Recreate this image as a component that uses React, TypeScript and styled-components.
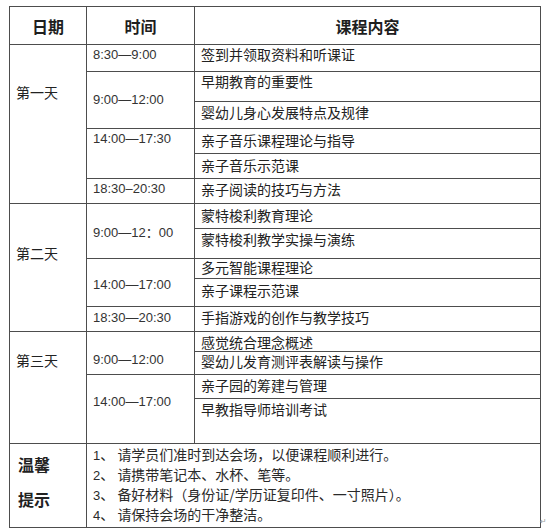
import styled, { createGlobalStyle } from "styled-components"

const GlobalStyle = createGlobalStyle`
  html, body {
    margin: 0;
    padding: 0;
    background: #ffffff;
  }
  body {
    font-family: "Noto Sans CJK SC", "Noto Sans", sans-serif;
    color: #222222;
  }
`

const Page = styled.div`
  position: relative;
  width: 548px;
  height: 532px;
  padding: 6px 0 0 9px;
  box-sizing: border-box;
`

const Table = styled.table`
  width: 531px;
  border-collapse: collapse;
  table-layout: fixed;
  border: 1px solid #4d4d4d;
`

const Row = styled.tr<{ $h: number }>`
  height: ${({ $h }) => $h}px;
`

const HeadCell = styled.th`
  border: 1px solid #4d4d4d;
  padding: 0;
  font-size: 16px;
  font-weight: 700;
  line-height: 20px;
  text-align: center;
  vertical-align: middle;
  color: #1e1e1e;
`

const DayCell = styled.td<{ $top: number }>`
  border: 1px solid #4d4d4d;
  padding: ${({ $top }) => $top}px 0 0 6px;
  font-size: 14px;
  line-height: 20px;
  vertical-align: top;
`

const TimeCell = styled.td<{ $top: number }>`
  border: 1px solid #4d4d4d;
  padding: ${({ $top }) => $top}px 0 0 6px;
  font-family: "Liberation Sans", "Noto Sans CJK SC", sans-serif;
  font-size: 13px;
  line-height: 20px;
  vertical-align: top;
  color: #333333;
  white-space: nowrap;
`

const ContentCell = styled.td<{ $top?: number }>`
  border: 1px solid #4d4d4d;
  padding: ${({ $top = 1 }) => $top}px 0 0 6px;
  font-size: 14px;
  line-height: 17px;
  vertical-align: top;
  white-space: nowrap;
  overflow: hidden;
`

const TipTitle = styled.td`
  border: 1px solid #4d4d4d;
  padding: 3px 0 0 8px;
  font-size: 16px;
  font-weight: 700;
  line-height: 35px;
  vertical-align: top;
`

const TipList = styled.td`
  border: 1px solid #4d4d4d;
  padding: 1px 0 0 6px;
  vertical-align: top;
`

const TipLine = styled.div`
  font-size: 14px;
  line-height: 18px;
  color: #2a2a2a;
  white-space: nowrap;
`

const TipNum = styled.span`
  font-family: "Liberation Sans", "Noto Sans CJK SC", sans-serif;
  font-size: 13px;
`

const ReturnMark = styled.span`
  position: absolute;
  left: 540px;
  top: 517px;
  font-family: "DejaVu Sans", sans-serif;
  font-size: 8px;
  color: #9a9a9a;
`

type Item = { text: string; h: number; top?: number }
type Slot = { time: string; top: number; items: Item[] }
type Day = { label: string; top: number; slots: Slot[] }

const days: Day[] = [
  {
    label: "第一天",
    top: 37,
    slots: [
      { time: "8:30—9:00", top: 0, items: [{ text: "签到并领取资料和听课证", h: 27 }] },
      {
        time: "9:00—12:00",
        top: 18,
        items: [
          { text: "早期教育的重要性", h: 30 },
          { text: "婴幼儿身心发展特点及规律", h: 27, top: 2 },
        ],
      },
      {
        time: "14:00—17:30",
        top: 0,
        items: [
          { text: "亲子音乐课程理论与指导", h: 25, top: 3 },
          { text: "亲子音乐示范课", h: 25, top: 3 },
        ],
      },
      { time: "18:30–20:30", top: 0, items: [{ text: "亲子阅读的技巧与方法", h: 25, top: 2 }] },
    ],
  },
  {
    label: "第二天",
    top: 39,
    slots: [
      {
        time: "9:00—12：00",
        top: 19,
        items: [
          { text: "蒙特梭利教育理论", h: 25, top: 3 },
          { text: "蒙特梭利教学实操与演练", h: 30, top: 2 },
        ],
      },
      {
        time: "14:00—17:00",
        top: 16,
        items: [
          { text: "多元智能课程理论", h: 20, top: 0 },
          { text: "亲子课程示范课", h: 28, top: 3 },
        ],
      },
      { time: "18:30—20:30", top: 1, items: [{ text: "手指游戏的创作与教学技巧", h: 25, top: 2 }] },
    ],
  },
  {
    label: "第三天",
    top: 18,
    slots: [
      {
        time: "9:00—12:00",
        top: 18,
        items: [
          { text: "感觉统合理念概述", h: 19, top: 2 },
          { text: "婴幼儿发育测评表解读与操作", h: 23, top: 1 },
        ],
      },
      {
        time: "14:00—17:00",
        top: 17,
        items: [
          { text: "亲子园的筹建与管理", h: 24, top: 2 },
          { text: "早教指导师培训考试", h: 45, top: 2 },
        ],
      },
    ],
  },
]

const tips = [
  "请学员们准时到达会场，以便课程顺利进行。",
  "请携带笔记本、水杯、笔等。",
  "备好材料（身份证/学历证复印件、一寸照片）。",
  "请保持会场的干净整洁。",
]

export default function App() {
  const rows: JSX.Element[] = []

  days.forEach((day, di) => {
    const daySpan = day.slots.reduce((n, s) => n + s.items.length, 0)
    day.slots.forEach((slot, si) => {
      slot.items.forEach((item, ii) => {
        rows.push(
          <Row key={`${di}-${si}-${ii}`} $h={item.h}>
            {si === 0 && ii === 0 && (
              <DayCell rowSpan={daySpan} $top={day.top}>
                {day.label}
              </DayCell>
            )}
            {ii === 0 && (
              <TimeCell rowSpan={slot.items.length} $top={slot.top}>
                {slot.time}
              </TimeCell>
            )}
            <ContentCell $top={item.top}>{item.text}</ContentCell>
          </Row>
        )
      })
    })
  })

  return (
    <>
      <GlobalStyle />
      <Page>
        <Table>
          <colgroup>
            <col style={{ width: 77 }} />
            <col style={{ width: 108 }} />
            <col style={{ width: 346 }} />
          </colgroup>
          <tbody>
            <Row $h={38}>
              <HeadCell>日期</HeadCell>
              <HeadCell>时间</HeadCell>
              <HeadCell>课程内容</HeadCell>
            </Row>
            {rows}
            <Row $h={84}>
              <TipTitle>
                <div>温馨</div>
                <div>提示</div>
              </TipTitle>
              <TipList colSpan={2}>
                {tips.map((t, i) => (
                  <TipLine key={i}>
                    <TipNum>{i + 1}</TipNum>、 {t}
                  </TipLine>
                ))}
              </TipList>
            </Row>
          </tbody>
        </Table>
        <ReturnMark>↵</ReturnMark>
      </Page>
    </>
  )
}
